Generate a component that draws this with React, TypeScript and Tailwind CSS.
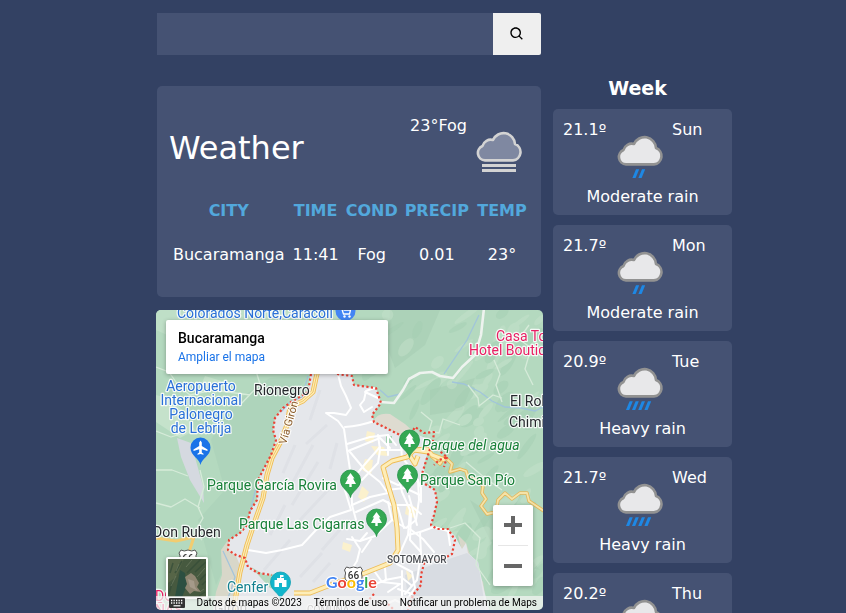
import { BiSearch } from "react-icons/bi";

type Weather = "fog" | "moderate" | "heavy";

const week: { day: string; temp: string; condition: string; icon: Weather }[] = [
  { day: "Sun", temp: "21.1º", condition: "Moderate rain", icon: "moderate" },
  { day: "Mon", temp: "21.7º", condition: "Moderate rain", icon: "moderate" },
  { day: "Tue", temp: "20.9º", condition: "Heavy rain", icon: "heavy" },
  { day: "Wed", temp: "21.7º", condition: "Heavy rain", icon: "heavy" },
  { day: "Thu", temp: "20.2º", condition: "Heavy rain", icon: "heavy" },
];

const drops: Record<Weather, number[]> = {
  fog: [],
  moderate: [24.4, 30.4],
  heavy: [18, 24, 30.2, 36.4],
};

function WeatherIcon({ kind }: { kind: Weather }) {
  const fog = kind === "fog";
  return (
    <svg viewBox="0 0 64 64" className="size-16 shrink-0" role="img" aria-label={kind}>
      <path
        d="M18 45.4 A7.5 7.5 0 0 1 15.5 31 A8.5 8.5 0 0 1 26 25 A11.5 11.5 0 0 1 48 29 A8.5 8.5 0 0 1 46 45.4 Z"
        fill={fog ? "#7f88a1" : "#e8e8ea"}
        stroke={fog ? "#d3d3d3" : "#929292"}
        strokeWidth="2.6"
        strokeLinejoin="round"
      />
      {fog && <path d="M15 49h34v3H15zM15 54h34v3H15z" fill="#d3d3d3" />}
      {drops[kind].map((x) => (
        <path key={x} d={`M${x} 59 l3.6 -8.8 h3.2 l-3.6 8.8 z`} fill="#1e88e5" />
      ))}
    </svg>
  );
}

/* Hillshade strokes, spread over the terrain with a small seeded generator. */
function makeShades() {
  let seed = 11;
  const next = () => {
    seed = (seed * 16807) % 2147483647;
    return seed / 2147483647;
  };
  return Array.from({ length: 170 }, (_, i) => ({
    x: 335 + next() * 210,
    y: 310 + next() * 290,
    rx: 5 + next() * 12,
    ry: 2 + next() * 4,
    angle: -70 + next() * 45,
    fill: i % 2 === 0 ? "#c8e3cc" : "#a3ccb1",
  }));
}
const shades = makeShades();

const cityPath =
  "M311 370 L308 392 291 402 283 408 275 418 273 430 276 440 271 455 258 480 257 500 250 511 247 525 240 533 229 540 228 550 236 556 242 570 232 613 H490 L484 590 478 562 468 553 466 543 462 549 455 536 448 529 437 529 431 525 434 515 437 502 435 490 425 484 424 465 428 452 434 441 418 435 402 435 390 430 374 422 372 415 381 403 376 388 354 385 350 370 Z";

const localRoads = [
  "M338 374 L341 386 346 396 351 408 346 415 334 413 326 413 338 421 344 429 347 450 351 476 352 505 356 520",
  "M345 427 Q360 426 374 421",
  "M374 388 L366 391 364 400 360 405 364 412 372 407 M365 392 L378 398",
  "M347 444 L370 437 388 435 396 445",
  "M348 451 L380 438 390 448",
  "M350 452 L365 470 380 482 387 492",
  "M378 435 L380 450 378 463 362 480",
  "M380 447 L365 464 352 480",
  "M388 435 L388 455 M380 450 H402 M401 445 L402 458",
  "M352 505 L370 497 388 493 M356 512 L383 500 398 508 404 528",
  "M343 484 L351 510 330 517 316 530 302 545 282 550 266 553 248 550",
  "M388 502 L392 520 375 536 360 541 347 539 M352 537 L360 549 357 561 350 572",
  "M371 539 L362 552 M360 541 L367 533 M392 520 L406 528 416 520 419 500 418 480",
  "M398 474 L402 492 410 510 408 535 400 553",
  "M383 478 L398 485 418 480 M386 490 L405 488 420 495 M391 505 L410 505 421 514",
  "M404 460 L414 472 421 488 421 502 M409 496 L417 525",
  "M408 535 L420 532 434 527 448 531 450 545 M410 529 L423 539 434 552",
  "M420 532 L421 554 417 580 405 594 M411 514 L410 540 421 552",
  "M397 564 L412 572 415 588 402 606 M385 568 L386 580 370 586 M375 572 L382 582 400 584 M385 580 L401 577 411 585 M388 592 L400 584 M382 606 L395 600 410 607 M398 589 L412 594 M402 571 L402 609",
];

const mainRoads = [
  "M318 370 L316 378 313 392 303 401 290 407 287 425 280 443 272 458 267 475 263 498 256 518 247 545 240 572 233 613",
  "M294 593 L310 593 333 584 365 573 390 563 398 550 397 528 394 505 388 485 383 467 392 461 407 457 414 450 427 449 432 455 445 460",
  "M410 456 L415 464 418 456 M414 450 L428 452",
];

const ridgeRoads =
  "M431 456 L440 464 445 457 452 464 450 472 460 469 466 471 468 478 478 480 483 486 482 493 486 499 481 506 487 514 496 512 498 500 505 493 512 499 520 493 527 493 529 501 544 511";

const cityBorder =
  "M311 374 L308 392 291 402 283 408 275 418 273 430 276 440 271 455 258 480 257 500 250 511 247 525 240 533 229 540 228 550 236 555 245 558 248 567 258 573 272 575 M337 374 L352 376 354 385 376 388 381 403 372 415 374 422 390 430 402 436 M411 434 L415 427 424 433 434 432 433 441 M430 449 L426 461 422 474 425 484 435 490 437 502 434 515 431 525 437 529 448 529 455 540 452 554 441 560 425 560 421 575 421 585 413 595 408 610 M437 449 L447 457 439 460 434 465 M447 457 L444 467 M374 594 L365 604 M388 604 L396 612";

function ParkPin({ x, y }: { x: number; y: number }) {
  return (
    <g transform={`translate(${x} ${y})`}>
      <path
        d="M0 17.5 C-1 11 -10 8.500 -10 0 A10 10 0 0 1 10 0 C10 8.500 1 11 0 17.500Z"
        fill="#34a853"
        stroke="#218f47"
        strokeWidth="0.8"
      />
      <path d="M0 -7 L4 -1.500 H2.500 L5.500 4 H1.200 V7 H-1.200 V4 H-5.500 L-2.500 -1.500 H-4Z" fill="#fff" />
    </g>
  );
}

function Shield({ x, y }: { x: number; y: number }) {
  return (
    <g transform={`translate(${x} ${y})`}>
      <path
        d="M-7 -8 Q-4 -6 0 -8 Q4 -6 7 -8 L9 -5 Q7 -2 8.500 1 Q9 6 4 7 Q1 7 0 9 Q-1 7 -4 7 Q-9 6 -8.500 1 Q-7 -2 -9 -5Z"
        fill="#fff"
        stroke="#555"
        strokeWidth="1"
      />
      <text y="4" textAnchor="middle" className="text-[10px] font-medium" fill="#333">66</text>
    </g>
  );
}

function MapDrawing() {
  return (
    <svg
      viewBox="156 310 387 300"
      preserveAspectRatio="xMidYMid slice"
      className="block size-full font-[Roboto,sans-serif]"
      role="img"
      aria-label="Mapa de Bucaramanga"
    >
      <rect x="150" y="300" width="400" height="320" fill="#b4d9bf" />
      <path d="M156 310 H300 L256 345 205 352 156 330Z" fill="#bfdfc7" />
      <path d="M310 375 L270 378 230 405 211 440 225 490 198 520 216 585 242 530 256 490 275 440 275 415Z" fill="#abd1b8" opacity=".65" />
      <path d="M205 376 L225 382 223 392 201 385Z M156 395 L175 400 195 430 180 438 156 422Z" fill="#c5e2cb" />
      <path d="M390 310 H440 L425 345 395 368 388 350Z M430 390 L475 378 462 410 430 415Z M470 500 L500 520 540 570 500 560Z" fill="#a6cdb4" opacity=".6" />
      <g opacity=".42">
        {shades.map((s, i) => (
          <ellipse key={i} cx={s.x} cy={s.y} rx={s.rx} ry={s.ry} fill={s.fill} transform={`rotate(${s.angle} ${s.x} ${s.y})`} />
        ))}
      </g>
      <path d="M228 540 L221 550 222 575 216 592 213 613 H240 L248 565Z M458 535 L466 543 475 570 483 582 488 613 H478 L466 570Z" fill="#d8d7c9" />
      <path d={cityPath} fill="#e5e7eb" />
      <path d="M373 422 Q377 412 390 414 L405 424 416 434 402 436 390 430Z" fill="#dedbd0" />
      <path d="M251 567 L265 575 278 574 286 592 270 588Z" fill="#b4d9bf" />
      <path d="M405 575 L440 562 467 553 478 562 486 613 H410Z" fill="#d8dce2" />
      <g stroke="#dcdfe4" strokeWidth="3" fill="none" opacity=".75">
        <path d="M320 390 L310 420 M327 425 L306 444 M295 445 L283 473 M313 445 L293 482 M318 462 L292 505 M285 505 L270 535 M328 490 L300 520 M337 443 L330 469 M290 540 L264 570 M344 525 L322 550 M322 553 L300 577 M330 563 L313 582" />
      </g>
      <path d="M177 438 L191 443 203 486 204 503 190 480 181 457Z" fill="#d5d9e0" />
      <g fill="#fbf1cd">
        <path d="M367 431 l8 2 -2 10 -8 -2Z M371 446 l13 1 4 9 -11 -1Z M365 459 l8 1 -2 15 -9 -5Z M407 503 l10 5 -3 10 -9 -4Z M362 486 l7 6 -5 10 -6 -5Z M343 542 l9 3 -2 7 -8 -3Z M406 570 l7 6 -5 5Z" />
      </g>
      <path d="M386 436 h6 v7 h-6Z" fill="#9fd1ae" />

      <g fill="none" stroke="#9fc3dd" strokeWidth="1.3" opacity=".9">
        <path d="M479 315 L467 340 444 374 M452 382 L464 384 480 392 492 401 505 407 521 408 535 411 543 407" />
        <path d="M380 390 L388 397 400 394 M308 376 L302 397 290 402 281 412 M258 480 L250 512 M223 551 L235 577 231 590 222 613" />
      </g>
      <g fill="none" stroke="#d6ebd9" strokeWidth="1.300" strokeLinejoin="round">
        <path d="M156 367 L169 372 178 385 190 395 213 390 250 395 M156 470 L172 470 188 476 M156 503 L171 507 185 499 200 508 M200 470 L204 487 198 507 203 518 195 532 202 540 M156 431 L171 437 181 434 M248 345 L260 384 240 405 M468 385 L478 398 479 406 493 395 502 398 M494 360 L500 374 496 385 502 402 M529 325 L519 339 531 348 525 369 533 385 M421 412 L432 421 429 431 439 433 443 419 460 425 M502 490 L485 478 466 462 M450 528 L465 523 480 538 476 565 490 585" />
      </g>
      <g fill="none" stroke="#fff" strokeLinecap="round" strokeLinejoin="round">
        <path d="M484 308 L481 335 475 355 462 367 453 378 440 376 432 372 420 373 409 379 403 390 394 403 380 402" stroke="#eef3ef" strokeWidth="2.600" />
        <g strokeWidth="2">{localRoads.map((d) => <path key={d} d={d} />)}</g>
      </g>
      <g fill="none" strokeLinejoin="round">
        <path d={ridgeRoads} stroke="#e3b658" strokeWidth="3.400" />
        <path d={ridgeRoads} stroke="#f6e3a8" strokeWidth="1.800" />
        <path d="M156 538 L176 541 194 537 188 555" stroke="#f2cc70" strokeWidth="3" />
        {mainRoads.map((d) => <path key={d} d={d} stroke="#efbd55" strokeWidth="5" />)}
        {mainRoads.map((d) => <path key={d} d={d} stroke="#fdedb8" strokeWidth="3.200" />)}
        <path d={mainRoads[0]} stroke="#efbd55" strokeWidth="0.800" />
        <path d={cityBorder} stroke="#ea4335" strokeWidth="2.200" strokeDasharray="2.200 2.400" />
      </g>

      <Shield x={188} y={558} />
      <Shield x={353.5} y={575} />
      <ParkPin x={409.5} y={440} />
      <ParkPin x={350.5} y={480} />
      <ParkPin x={407.5} y={475} />
      <ParkPin x={376.5} y={519} />
      <g transform="translate(200.500 447.500)">
        <path d="M0 17.500 C-1 11 -10 8.500 -10 0 A10 10 0 0 1 10 0 C10 8.500 1 11 0 17.500Z" fill="#1a73e8" />
        <path d="M0 -7 L1.300 -5 V-1.500 L7 2 V3.500 L1.300 1.800 V5 L3 6.300 V7.300 L0 6.500 L-3 7.300 V6.300 L-1.300 5 V1.800 L-7 3.500 V2 L-1.300 -1.500 V-5Z" fill="#fff" />
      </g>
      <g transform="translate(280.500 582)">
        <path d="M0 17.500 C-1 11 -10 8.500 -10 0 A10 10 0 0 1 10 0 C10 8.500 1 11 0 17.500Z" fill="#12b5cb" stroke="#0e9fb3" strokeWidth=".8" />
        <path d="M-6 5 V-2 H-3.500 V-4 H-.500 V-7 H3 V-5 H.800 V-4 H3.500 V-2 H6 V5 H1.500 V1 H-1.500 V5Z" fill="#fff" />
      </g>
      <g transform="translate(345.500 311)">
        <circle r="10" fill="#4285f4" />
        <path d="M-6 -3 H-4 L-2 3 H4 L5 -1 H-2" fill="none" stroke="#fff" strokeWidth="1.300" />
        <circle cx="-1" cy="5.500" r="1.200" fill="#fff" />
        <circle cx="4" cy="5.500" r="1.200" fill="#fff" />
      </g>

      <g className="text-[14px]" stroke="#fff" strokeWidth="2.400" strokeLinejoin="round" strokeOpacity=".85" paintOrder="stroke">
        <g fill="#2a70d8">
          <text x="177" y="318">Colorados Norte,Caracoli</text>
          <g textAnchor="middle">
            <text x="201" y="391">Aeropuerto</text>
            <text x="201" y="405">Internacional</text>
            <text x="201" y="419">Palonegro</text>
            <text x="201" y="433">de Lebrija</text>
          </g>
        </g>
        <g fill="#25282c">
          <text x="254" y="395">Rionegro</text>
          <text x="153" y="537">Don Ruben</text>
          <text x="510" y="406">El Roble</text>
          <text x="509" y="427">Chimita</text>
        </g>
        <g fill="#188038">
          <text x="207" y="490">Parque García Rovira</text>
          <text x="239" y="529">Parque Las Cigarras</text>
          <text x="420" y="485">Parque San Pío</text>
          <text x="422" y="450" className="italic">Parque del agua</text>
        </g>
        <g fill="#e91e63">
          <text x="496" y="341">Casa Tona</text>
          <text x="469" y="355">Hotel Boutique</text>
          <text x="155" y="601">DO</text>
          <text x="155" y="615">ÑAS</text>
        </g>
        <text x="227" y="592" fill="#12808f">Cenfer</text>
        <text x="214" y="613" fill="#777">Girón</text>
        <text x="387" y="563" fill="#4a4d52" className="text-[10px] font-medium">SOTOMAYOR</text>
        <text x="307" y="613" fill="#777" className="text-[10px]">COMUNA</text>
        <text transform="translate(286 445) rotate(-74)" fill="#8a5a28" className="text-[11px]">Vía Girón</text>
        <text x="326" y="588" className="font-[Lato,sans-serif] text-[16px] font-bold" strokeOpacity="1">
          <tspan fill="#4285f4">G</tspan><tspan fill="#ea4335">o</tspan><tspan fill="#fbbc05">o</tspan><tspan fill="#4285f4">g</tspan><tspan fill="#34a853">l</tspan><tspan fill="#ea4335">e</tspan>
        </text>
      </g>
    </svg>
  );
}

function SatelliteThumb() {
  return (
    <svg viewBox="0 0 38 38" className="size-full" preserveAspectRatio="none" aria-hidden="true">
      <rect width="38" height="38" fill="#46593f" />
      <path d="M0 0H16L8 18L0 24Z" fill="#566547" />
      <path d="M12 11L17 14 19 26 14 38H7L10 22Z" fill="#2c4f41" />
      <path d="M17 18L23 14 27 17 31 24 29 28 33 33 26 32 22 35 17 29 19 25Z" fill="#8f8672" />
      <path d="M20 20l6 2 1 6 3 4-8-4Z" fill="#a59a8a" />
      <g stroke="#334c37" strokeWidth="1.500" fill="none" opacity=".7">
        <path d="M38 3L27 13M33 0L19 14M38 15L32 21M37 33L31 37M5 4L2 14M14 2L7 14M4 24L1 35M38 22L34 26" />
      </g>
      <g stroke="#758267" fill="none" opacity=".6">
        <path d="M24 1L18 8M37 9L29 18M8 17L3 27M36 30L33 32M11 5L8 12" />
      </g>
    </svg>
  );
}

function KeyboardIcon() {
  return (
    <svg viewBox="0 0 16 10" className="h-2.5 w-4" aria-hidden="true">
      <rect width="16" height="10" rx="1" fill="#333" />
      <path d="M2 2.500H14M2 5H14" stroke="#fff" strokeWidth="1.300" strokeDasharray="1.300 1.200" />
      <path d="M4.500 7.800H11.500" stroke="#fff" strokeWidth="1.200" />
    </svg>
  );
}

function CityMap() {
  return (
    <section className="relative -mr-0.5 -ml-px mt-[13px] h-[300px] overflow-hidden rounded-[5px] font-[Roboto,sans-serif]">
      <MapDrawing />
      <div className="absolute top-2.5 left-2.5 h-[54px] w-[222px] rounded-xs bg-white px-3 pt-2 shadow-[0_1px_4px_rgba(0,0,0,0.3)]">
        <h2 className="text-sm leading-5 font-medium text-black">Bucaramanga</h2>
        <a href="#map" className="block text-xs leading-[18px] text-[#1a73e8]">Ampliar el mapa</a>
      </div>
      <button
        type="button"
        aria-label="Mostrar imágenes satelitales"
        className="absolute bottom-[11px] left-2.5 size-[42px] overflow-hidden rounded-xs border-2 border-white shadow-[0_1px_4px_rgba(0,0,0,0.3)]"
      >
        <SatelliteThumb />
      </button>
      <div className="absolute right-2.5 bottom-6 flex w-10 flex-col items-center rounded-xs bg-white text-[#666] shadow-[0_1px_4px_rgba(0,0,0,0.3)]">
        <button type="button" aria-label="Acercar" className="flex size-10 items-center justify-center">
          <svg viewBox="0 0 18 18" className="size-[18px]"><path d="M7 0h4v7h7v4h-7v7H7v-7H0V7h7z" fill="currentColor" /></svg>
        </button>
        <span className="h-px w-[30px] bg-[#e6e6e6]" />
        <button type="button" aria-label="Alejar" className="flex size-10 items-center justify-center">
          <svg viewBox="0 0 18 18" className="size-[18px]"><path d="M0 7h18v4H0z" fill="currentColor" /></svg>
        </button>
      </div>
      <div className="absolute inset-x-0 bottom-0 flex h-3.5 items-center justify-end gap-3 bg-[#f5f5f5]/70 pr-1.5 text-[10px] leading-none whitespace-nowrap text-black">
        <button type="button" aria-label="Combinaciones de teclas"><KeyboardIcon /></button>
        <span>Datos de mapas ©2023</span>
        <a href="#terms">Términos de uso</a>
        <a href="#report">Notificar un problema de Maps</a>
      </div>
    </section>
  );
}

function SearchBar() {
  return (
    <form className="flex h-[42px]" onSubmit={(e) => e.preventDefault()}>
      <input type="text" aria-label="City" className="min-w-0 flex-1 bg-[#455273] px-3 text-white outline-none" />
      <button type="submit" aria-label="Search" className="flex w-12 items-center justify-center rounded-r-xs bg-[#efefef] text-black">
        <BiSearch size={16} />
      </button>
    </form>
  );
}

function CurrentWeather() {
  return (
    <section className="mt-[31px] rounded-[5px] bg-[#455273] pt-[29px] pr-2.5 pb-5 pl-3">
      <div className="flex h-[66px] items-start">
        <h1 className="flex-1 self-center text-[32px] leading-10">Weather</h1>
        <p className="leading-[22px]">23°Fog</p>
        <WeatherIcon kind="fog" />
      </div>
      <table className="mt-2 w-full table-fixed text-center">
        <colgroup>
          <col className="w-[33%]" />
          <col className="w-[15%]" />
          <col className="w-[16%]" />
          <col className="w-[20%]" />
          <col className="w-[16%]" />
        </colgroup>
        <thead className="text-[#52a8dc]">
          <tr className="h-11">
            <th>CITY</th>
            <th>TIME</th>
            <th>COND</th>
            <th>PRECIP</th>
            <th>TEMP</th>
          </tr>
        </thead>
        <tbody>
          <tr className="h-11">
            <td>Bucaramanga</td>
            <td>11:41</td>
            <td>Fog</td>
            <td>0.01</td>
            <td>23°</td>
          </tr>
        </tbody>
      </table>
    </section>
  );
}

export default function App() {
  return (
    <main className="flex h-screen items-start gap-3 overflow-hidden bg-[#334163] pt-[13px] pr-[114px] pl-[157px] font-['DejaVu_Sans',Verdana,sans-serif] text-base text-white">
      <div className="min-w-0 flex-1">
        <SearchBar />
        <CurrentWeather />
        <CityMap />
      </div>
      <aside className="w-[179px] shrink-0 pt-[63px]">
        <h2 className="mb-[9px] pr-2.5 text-center text-[19px] leading-6 font-bold">Week</h2>
        <ul className="flex flex-col gap-2.5">
          {week.map((d) => (
            <li key={d.day} className="rounded-[5px] bg-[#455273] px-2.5 pt-2.5 pb-1">
              <div className="flex items-start leading-[22px]">
                <span className="w-[45px]">{d.temp}</span>
                <WeatherIcon kind={d.icon} />
                <span>{d.day}</span>
              </div>
              <p className="text-center leading-7">{d.condition}</p>
            </li>
          ))}
        </ul>
      </aside>
    </main>
  );
}
